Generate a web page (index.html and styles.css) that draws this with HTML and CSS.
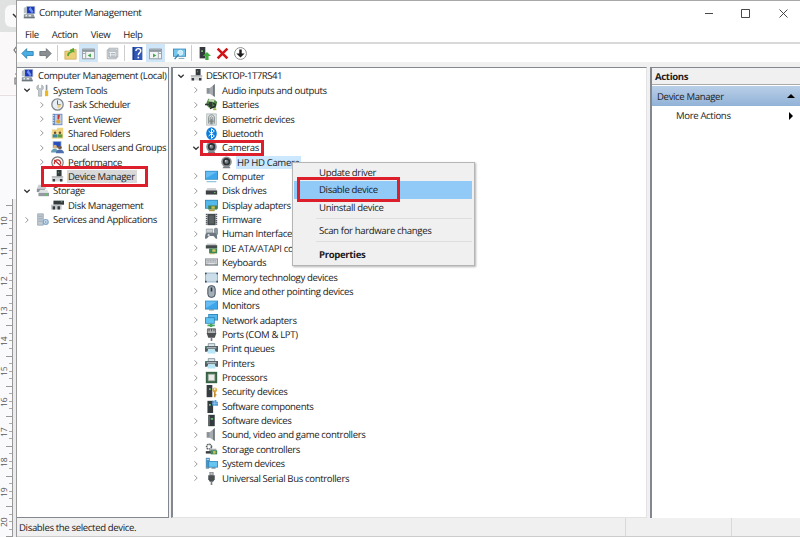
FILE: index.html
```html
<!DOCTYPE html>
<html lang="en">
<head>
    <meta charset="UTF-8">
    <title>Computer Management</title>
    <link rel="stylesheet" href="styles.css">
</head>
<body>
    <svg class="sprite" xmlns="http://www.w3.org/2000/svg">
        <symbol id="mgmt" viewBox="0 0 16 16"><path d="M1 2l4-1v8H1z" fill="#b9c0c8"/><path d="M4 0h11v10H4z" fill="#b4bfcb"/><path d="M5 1h9v8H5z" fill="#1d37b8"/><path d="M9 1l4 6-2 2-4-5z" fill="#6f92ee"/><path d="M1 10h12l2 5H1z" fill="#8e979e"/><path d="M3 11h2v2H3zM7 11h3v2H7z" fill="#e5e9ec"/><path d="M1 14h13v1H1z" fill="#59636b"/></symbol>
        <symbol id="tools" viewBox="0 0 16 16"><path d="M3 1v4l2 1 2-1V1l2 2v3L7 8v7H3V8L1 6V3z" fill="#c3c8cc" stroke="#858c91" stroke-width=".6"/><path d="M12 1h2v7h-2z" fill="#8d969d"/><path d="M11 8h4v7h-4z" fill="#edb91f"/></symbol>
        <symbol id="clock" viewBox="0 0 16 16"><circle cx="8" cy="8" r="7" fill="#e8eff4" stroke="#83888d" stroke-width="1.6"/><path d="M8 3v5h4" stroke="#48637a" fill="none" stroke-width="1.2"/><path d="M8 8h5l-2 4-3 1z" fill="#ecd08c"/></symbol>
        <symbol id="event" viewBox="0 0 16 16"><path d="M2 1h12v14H2z" fill="#6587bb"/><path d="M5 2h8v12H5z" fill="#c0d0e4"/><path d="M2 3h2M2 6h2M2 9h2M2 12h2" stroke="#fff"/><path d="M8 2h3l-1 6H8z" fill="#c6342c"/><circle cx="9" cy="10.500" r="2.500" fill="#e0a72c"/></symbol>
        <symbol id="shared" viewBox="0 0 16 16"><path d="M1 3h6l1-2h7v13H1z" fill="#eed27c"/><path d="M1 5h13v9H1z" fill="#f5df92"/><circle cx="5" cy="7" r="1.6" fill="#704f2e"/><path d="M2 13V9h6v4z" fill="#3c86a2"/><circle cx="11" cy="7" r="1.6" fill="#704f2e"/><path d="M8.500 13V9H14v4z" fill="#5f9a49"/></symbol>
        <symbol id="users" viewBox="0 0 16 16"><path d="M2 0h11v9H2z" fill="#b9c5d4"/><path d="M3 1h9v7H3z" fill="#294fbc"/><circle cx="5" cy="7" r="2.300" fill="#d5b47f"/><path d="M0 14c0-6 9-6 9 0z" fill="#669eb5"/><circle cx="11" cy="8" r="2.300" fill="#765b44"/><path d="M6 15c0-6 10-6 10 0z" fill="#4d6fae"/></symbol>
        <symbol id="perf" viewBox="0 0 16 16"><circle cx="8" cy="8" r="7" fill="#fff" stroke="#777" stroke-width="1.4"/><path d="M4 10c0-7 8-7 8 0M4 5l8 7" stroke="#c52e2b" stroke-width="1.500" fill="none"/></symbol>
        <symbol id="device" viewBox="0 0 16 16"><path d="M7 0h6v8H7z" fill="#343a3d"/><path d="M9 2h1v2H9z" fill="#66b16a"/><path d="M1 8h14v6H1z" fill="#d6d8d9"/><path d="M1 8h14v1H1z" fill="#8d9193"/><path d="M2 11h3v3H2zM11 11h3v3h-3z" fill="#343a3d"/></symbol>
        <symbol id="storage" viewBox="0 0 16 16"><path d="M3 1h8l2 5H1z" fill="#c9ced1"/><path d="M1 6h10v4H1z" fill="#8c9499"/><path d="M5 7h9l2 4H3z" fill="#dfe2e4"/><path d="M3 11h13v4H3z" fill="#929a9f"/><path d="M11 12h3v2h-3z" fill="#5bca52"/></symbol>
        <symbol id="disk" viewBox="0 0 16 16"><path d="M3 2h13v5H3z" fill="#353a3d"/><path d="M12 3h2v1h-2z" fill="#7bd97c"/><path d="M0 7h13v6H0z" fill="#c3c6c8"/><path d="M2 9h3v4H2zM8 9h3v4H8z" fill="#353a3d"/></symbol>
        <symbol id="services" viewBox="0 0 16 16"><path d="M2 1h7v14H2z" fill="#c2cbd2" stroke="#7e8b96" stroke-width=".7"/><path d="M3 4h5M3 7h5M3 10h5" stroke="#8ea3b5"/><circle cx="12" cy="11" r="3" fill="#d5e3ef" stroke="#7fa7cc" stroke-width="1.500"/><circle cx="12" cy="11" r="1" fill="#5f8fbd"/></symbol>
        <symbol id="speaker" viewBox="0 0 16 16"><path d="M2 5h4v7H2z" fill="#8b9297"/><path d="M6 5l6-5v16l-6-4z" fill="#a6acb0"/><path d="M10 2l2-2v16l-2-2z" fill="#6b7277"/></symbol>
        <symbol id="battery" viewBox="0 0 16 16"><path d="M4 1l8 1 3 3-2 8-8-1-4-4z" fill="#4f8544"/><path d="M5 1l7 1-1 3-7-1z" fill="#c6d8b9"/><path d="M0 7h5v-2h4v6H5V9H0z" fill="#32383a"/><path d="M10 7c4 0 3 3 1 4l-5 2" fill="none" stroke="#222" stroke-width="1.500"/><path d="M10 13h4v2h-4z" fill="#9fb43c"/></symbol>
        <symbol id="finger" viewBox="0 0 16 16"><path d="M2 1h12v14H2z" fill="#dfe3e3" stroke="#a6adad" stroke-width=".8"/><path d="M4.500 13V6c0-5 7-5 7 0v7M6.500 14V7c0-3 3-3 3 0v7M8 7v7M5 10h6" fill="none" stroke="#707979"/></symbol>
        <symbol id="bluetooth" viewBox="0 0 16 16"><ellipse cx="8" cy="8" rx="6.500" ry="7.800" fill="#0d7cdb"/><path d="M4.500 5l7 6L8 14V2l3.500 3-7 6" fill="none" stroke="#fff" stroke-width="1.200"/></symbol>
        <symbol id="camera" viewBox="0 0 16 16"><path d="M5 12h6l2 3H3z" fill="#777e82"/><circle cx="8" cy="7" r="6.500" fill="#8b9195"/><circle cx="8" cy="7" r="4.500" fill="#2b3033"/><circle cx="8" cy="7" r="2.500" fill="#777f84"/><circle cx="7" cy="6" r="1" fill="#d5dcdf"/></symbol>
        <symbol id="monitor" viewBox="0 0 16 16"><path d="M0 2h16v11H0z" fill="#2d8fc5"/><path d="M1 3h14v9H1z" fill="#3ea6ea"/><path d="M1 3h14L1 11z" fill="#67bdf4"/><path d="M5 13h6v1H5z" fill="#68747b"/></symbol>
        <symbol id="computer" viewBox="0 0 16 16"><path d="M0 1h16v11H0z" fill="#2d8fc5"/><path d="M1 2h14v9H1z" fill="#3ea6ea"/><path d="M1 2h14L1 10z" fill="#67bdf4"/><path d="M2 14h12v1H2z" fill="#58a6c9"/></symbol>
        <symbol id="drive" viewBox="0 0 16 16"><path d="M3 5h10l2 4H1z" fill="#cdd0d2"/><path d="M1 8h14v5H1z" fill="#3d4143"/><path d="M11 10h2v1h-2z" fill="#74cd75"/></symbol>
        <symbol id="display" viewBox="0 0 16 16"><path d="M0 1h16v11H0z" fill="#3289b9"/><path d="M1 2h14v9H1z" fill="#53b9ed"/><path d="M4 8h11v5H4z" fill="#427f50"/><path d="M8 9h4v3H8z" fill="#d0bc55"/><path d="M5 13h7v2H5z" fill="#b0a449"/></symbol>
        <symbol id="chip" viewBox="0 0 16 16"><path d="M3 1h10v14H3z" fill="#444b4e"/><path d="M5 3h6v10H5z" fill="#5b6265"/><path d="M2 1v14M14 1v14" stroke="#555d61" stroke-width="2" stroke-dasharray="1.600 .8"/></symbol>
        <symbol id="hid" viewBox="0 0 16 16"><path d="M1 2h9v6H1z" fill="#a2aaaf"/><path d="M2 4h7M2 6h7" stroke="#e4e8ea"/><rect x="11" y="1" width="5" height="9" rx="2" fill="#8c969e"/><path d="M0 14c0-8 2-7 5-7h4c5 0 6 1 6 7-2 2-3-3-5-3H6c-2 0-4 5-6 3z" fill="#6c7780"/><path d="M3 10h3M4.500 8.500v3" stroke="#eceff1"/></symbol>
        <symbol id="ide" viewBox="0 0 16 16"><path d="M2 2h12v3H2z" fill="#c5c9cb"/><path d="M1 4h14v4H1z" fill="#444b4d"/><path d="M5 8h10v6H5z" fill="#3c8957"/><path d="M9 9h4v3H9z" fill="#d9c65f"/><path d="M6 14h6v1H6z" fill="#b29a3f"/></symbol>
        <symbol id="keyboard" viewBox="0 0 16 16"><path d="M0 3h16v9H0z" fill="#868d91"/><path d="M1 4h14v6H1z" fill="#c9cdd0"/><path d="M2 5.500h12M2 7.500h12" stroke="#9aa1a5" stroke-dasharray="1.300 .7"/><path d="M4 9.500h8" stroke="#eee"/></symbol>
        <symbol id="memory" viewBox="0 0 16 16"><path d="M0 2h16v12H0z" fill="#8fa9bd"/><path d="M1 3h14v10H1z" fill="#cbdde9"/><path d="M0 2h2v2H0zM14 2h2v2h-2zM0 12h2v2H0zM14 12h2v2h-2z" fill="#344b5d"/></symbol>
        <symbol id="mouse" viewBox="0 0 16 16"><rect x="3.500" y=".800" width="9" height="14.400" rx="4" fill="#a4afb7" stroke="#3e4b54" stroke-width="1.200"/><path d="M8 3v5" stroke="#2b353b" stroke-width="2"/></symbol>
        <symbol id="network" viewBox="0 0 16 16"><path d="M4 0h12v8H4z" fill="#2b83bb"/><path d="M5 1h10v6H5z" fill="#55b7eb"/><path d="M0 4h12v8H0z" fill="#2b83bb"/><path d="M1 5h10v6H1z" fill="#5fc3f2"/><path d="M3 13h9v2H3zM6 12h3v4H6z" fill="#43a45c"/></symbol>
        <symbol id="port" viewBox="0 0 16 16"><path d="M3 1h10v6H3z" fill="#b1b5b7" stroke="#565b5e"/><path d="M5 1v3M8 1v3M11 1v3" stroke="#444"/><path d="M2 6h12l-2 6H4z" fill="#4c5053"/><path d="M7 12h2v4H7z" fill="#74797c"/></symbol>
        <symbol id="printer" viewBox="0 0 16 16"><path d="M4 2h8v4H4z" fill="#dfe7ea" stroke="#607680" stroke-width=".8"/><path d="M0 5h16v7h-3l-1-3H4l-1 3H0z" fill="#4f5c62"/><path d="M2 6h12v2H2z" fill="#a6b0b5"/><path d="M4 9h8l1 5H3z" fill="#b7e6f7"/><path d="M0 5h2v2H0z" fill="#388f66"/></symbol>
        <symbol id="cpu" viewBox="0 0 16 16"><path d="M1 1h14v14H1z" fill="#386245"/><path d="M4 4h8v8H4z" fill="#e8ebe7" stroke="#9fad9f"/></symbol>
        <symbol id="security" viewBox="0 0 16 16"><path d="M2 0h7v15H2z" fill="#363d40"/><path d="M5 4h2v2H5z" fill="#68c677"/><circle cx="12" cy="6" r="3" fill="#e0ad45"/><circle cx="12" cy="5" r="1" fill="#fff"/><path d="M11 8h2v7h-2zM13 11h1v2h-1z" fill="#c28c2e"/></symbol>
        <symbol id="component" viewBox="0 0 16 16"><path d="M3 1h7v15H3z" fill="#343b3e"/><path d="M5 5h2v2H5z" fill="#7ad487"/><path d="M9 1h3V0h2v2h2v5H9z" fill="#4c9dda"/><path d="M12 1v6M9 4h7" stroke="#b7dcf4" stroke-width=".6"/></symbol>
        <symbol id="software" viewBox="0 0 16 16"><path d="M4 1h8v14H4z" fill="#343b3e"/><path d="M5 2h1v12H5z" fill="#697174"/><path d="M7 5h3v2H7z" fill="#67bf76"/></symbol>
        <symbol id="storectl" viewBox="0 0 16 16"><circle cx="5" cy="4.500" r="3" fill="none" stroke="#5a6265" stroke-width="2" stroke-dasharray="2 .8"/><path d="M5 7h9v3H5z" fill="#a5abae"/><path d="M1 10h8v3H1z" fill="#373d40"/><path d="M7 9h8v5H7z" fill="#3e8b56"/><path d="M10 10h3v3h-3z" fill="#d8c45b"/></symbol>
        <symbol id="system" viewBox="0 0 16 16"><path d="M1 1h5v12H1z" fill="#4f92bb"/><path d="M2 3h3" stroke="#c8e3f3"/><path d="M4 5h12v8H4z" fill="#328bc0"/><path d="M5 6h10v6H5z" fill="#67c5f1"/><path d="M1 13h4v1H1zM8 13h5v1H8z" fill="#496777"/></symbol>
        <symbol id="usb" viewBox="0 0 16 16"><path d="M6 0h4v4H6z" fill="#bfc3c5" stroke="#5b6265" stroke-width=".8"/><path d="M4 4h8v5l-2 3H6l-2-3z" fill="#4a4f52"/><path d="M7 12h2v4H7z" fill="#777d80"/></symbol>
        <symbol id="back" viewBox="0 0 16 16"><path d="M1 8l6-6v3.500h8v5H7V14z" fill="#48aee3" stroke="#287cae"/></symbol>
        <symbol id="forward" viewBox="0 0 16 16"><path d="M15 8L9 2v3.500H1v5h8V14z" fill="#8a8f93" stroke="#676c70"/></symbol>
        <symbol id="folder-up" viewBox="0 0 16 16"><path d="M1 5h6l1-2h7v12H1z" fill="#edcf77" stroke="#c8a653" stroke-width=".8"/><path d="M4 11c0-4 1-5 4-5L7 4l5-3 1 6-2-1c-3 1-5 2-5 5z" fill="#55aa36"/></symbol>
        <symbol id="pane" viewBox="0 0 16 16"><path d="M.5 2.500h15v12H.5z" fill="#f2f4f5" stroke="#818b92"/><path d="M1 3h14v3H1z" fill="#8e989f"/><path d="M4.500 6v8M4 8H1" stroke="#929ba1"/><path d="M11 8v5l-4-2.500z" fill="#43a347"/></symbol>
        <symbol id="pane2" viewBox="0 0 16 16"><path d="M.5 2.500h15v12H.5z" fill="#f2f4f5" stroke="#818b92"/><path d="M1 3h14v3H1z" fill="#8e989f"/><path d="M11.500 6v8M12 8h3" stroke="#929ba1"/><path d="M5 8v5l4-2.500z" fill="#43a347"/></symbol>
        <symbol id="props" viewBox="0 0 16 16"><path d="M3.500 1.500h11v11h-11zM1.500 3.500h11v11h-11z" fill="#eef1f3" stroke="#9ba4aa"/><path d="M2 4h12v2H2z" fill="#b6bec4"/><path d="M3 8h2M6 8h5M3 10h2M6 10h5M3 12h2M6 12h5" stroke="#a5adb3"/></symbol>
        <symbol id="help" viewBox="0 0 16 16"><path d="M2 0h12v16H2z" fill="#3159b5"/><path d="M2 0h2v16H2z" fill="#203d88"/><path d="M6 5c0-4 6-4 6 0 0 2-3 2-3 5" fill="none" stroke="#fff" stroke-width="1.800"/><path d="M8 12h2v2H8z" fill="#fff"/></symbol>
        <symbol id="scan" viewBox="0 0 16 16"><path d="M0 2h16v10H0z" fill="#3588b8"/><path d="M1 3h14v8H1z" fill="#73c6ee"/><circle cx="9" cy="7" r="3" fill="#c8eafa" stroke="#f1f7fa"/><path d="M7 9l-5 6" stroke="#357fab" stroke-width="1.500"/><path d="M7 14h7" stroke="#6a8da0"/></symbol>
        <symbol id="enable" viewBox="0 0 16 16"><path d="M2 0h7v14H2z" fill="#343a3d"/><path d="M4 4h2v2H4z" fill="#76cb78"/><path d="M11 6l5 5h-3v5H9v-5H6z" fill="#44aa43"/></symbol>
        <symbol id="cross" viewBox="0 0 16 16"><path d="M2 2l12 12M14 2L2 14" stroke="#d21419" stroke-width="3.200"/></symbol>
        <symbol id="down" viewBox="0 0 16 16"><circle cx="8" cy="8" r="7.300" fill="#fff" stroke="#777"/><path d="M6.500 3h3v5H13l-5 5-5-5h3.500z" fill="#1b1b1b"/></symbol>
        <symbol id="closed" viewBox="0 0 10 10"><path d="M3.500 2.300L6.200 5 3.500 7.700" fill="none" stroke="#999"/></symbol>
        <symbol id="open" viewBox="0 0 10 10"><path d="M2.300 3.700L5 6.300l2.700-2.600" fill="none" stroke="#333" stroke-width="1.200"/></symbol>
    </svg>

    <div class="screen">
        <!-- document window showing behind, only its left edge -->
        <div class="behind">
            <div class="tab"><svg viewBox="0 0 12 22"><path d="M8 9l3 3 4-4" fill="none" stroke="#333" stroke-width="1.500"/></svg></div>
            <div class="behind-tools"><svg viewBox="0 0 17 64"><path d="M17 14l-3 4 3 4M15 42h2M15 46h2v6h-2z" fill="none" stroke="#777" stroke-width="1.200"/></svg></div>
            <div class="behind-page"></div>
            <div class="ruler">
                <span>10</span><span>11</span><span>12</span><span>13</span><span>14</span><span>15</span><span>16</span><span>17</span><span>18</span><span>19</span><span>20</span>
            </div>
        </div>

        <div class="window">
            <div class="titlebar">
                <svg class="icon"><use href="#mgmt"/></svg>
                <span class="title">Computer Management</span>
                <svg class="controls" viewBox="0 0 84 12"><path d="M1 6.500h8M37.500 2.500h8v8h-8zM75.500 2.500l8 8M83.500 2.500l-8 8" fill="none" stroke="#333" stroke-width=".9"/></svg>
            </div>
            <div class="menubar"><span>File</span><span>Action</span><span>View</span><span>Help</span></div>
            <div class="toolbar">
                <b><svg><use href="#back"/></svg></b>
                <b><svg><use href="#forward"/></svg></b>
                <i></i>
                <b><svg><use href="#folder-up"/></svg></b>
                <b class="on"><svg><use href="#pane"/></svg></b>
                <b class="spaced"><svg><use href="#props"/></svg></b>
                <i></i>
                <b><svg><use href="#help"/></svg></b>
                <b class="on"><svg><use href="#pane2"/></svg></b>
                <b class="spaced"><svg><use href="#scan"/></svg></b>
                <i></i>
                <b><svg><use href="#enable"/></svg></b>
                <b><svg><use href="#cross"/></svg></b>
                <b><svg><use href="#down"/></svg></b>
            </div>

            <div class="panes">
                <ul class="tree console">
                    <li class="l0"><svg class="icon"><use href="#mgmt"/></svg><span>Computer Management (Local)</span></li>
                    <li class="l1"><svg class="arrow"><use href="#open"/></svg><svg class="icon"><use href="#tools"/></svg><span>System Tools</span></li>
                    <li class="l2"><svg class="arrow"><use href="#closed"/></svg><svg class="icon"><use href="#clock"/></svg><span>Task Scheduler</span></li>
                    <li class="l2"><svg class="arrow"><use href="#closed"/></svg><svg class="icon"><use href="#event"/></svg><span>Event Viewer</span></li>
                    <li class="l2"><svg class="arrow"><use href="#closed"/></svg><svg class="icon"><use href="#shared"/></svg><span>Shared Folders</span></li>
                    <li class="l2"><svg class="arrow"><use href="#closed"/></svg><svg class="icon"><use href="#users"/></svg><span>Local Users and Groups</span></li>
                    <li class="l2"><svg class="arrow"><use href="#closed"/></svg><svg class="icon"><use href="#perf"/></svg><span>Performance</span></li>
                    <li class="l2 current"><svg class="arrow"></svg><svg class="icon"><use href="#device"/></svg><span>Device Manager</span><em class="mark mark-manager"></em></li>
                    <li class="l1"><svg class="arrow"><use href="#open"/></svg><svg class="icon"><use href="#storage"/></svg><span>Storage</span></li>
                    <li class="l2"><svg class="arrow"></svg><svg class="icon"><use href="#disk"/></svg><span>Disk Management</span></li>
                    <li class="l1"><svg class="arrow"><use href="#closed"/></svg><svg class="icon"><use href="#services"/></svg><span>Services and Applications</span></li>
                </ul>

                <ul class="tree devices">
                    <li class="l0"><svg class="arrow"><use href="#open"/></svg><svg class="icon"><use href="#device"/></svg><span class="host">DESKTOP-1T7RS41</span></li>
                    <li class="l1"><svg class="arrow"><use href="#closed"/></svg><svg class="icon"><use href="#speaker"/></svg><span>Audio inputs and outputs</span></li>
                    <li class="l1"><svg class="arrow"><use href="#closed"/></svg><svg class="icon"><use href="#battery"/></svg><span>Batteries</span></li>
                    <li class="l1"><svg class="arrow"><use href="#closed"/></svg><svg class="icon"><use href="#finger"/></svg><span>Biometric devices</span></li>
                    <li class="l1"><svg class="arrow"><use href="#closed"/></svg><svg class="icon"><use href="#bluetooth"/></svg><span>Bluetooth</span></li>
                    <li class="l1"><svg class="arrow"><use href="#open"/></svg><svg class="icon"><use href="#camera"/></svg><span>Cameras</span><em class="mark mark-cameras"></em></li>
                    <li class="l2 selected"><svg class="arrow"></svg><svg class="icon"><use href="#camera"/></svg><span>HP HD Camera</span></li>
                    <li class="l1"><svg class="arrow"><use href="#closed"/></svg><svg class="icon"><use href="#computer"/></svg><span>Computer</span></li>
                    <li class="l1"><svg class="arrow"><use href="#closed"/></svg><svg class="icon"><use href="#drive"/></svg><span>Disk drives</span></li>
                    <li class="l1"><svg class="arrow"><use href="#closed"/></svg><svg class="icon"><use href="#display"/></svg><span>Display adapters</span></li>
                    <li class="l1"><svg class="arrow"><use href="#closed"/></svg><svg class="icon"><use href="#chip"/></svg><span>Firmware</span></li>
                    <li class="l1"><svg class="arrow"><use href="#closed"/></svg><svg class="icon"><use href="#hid"/></svg><span>Human Interface</span></li>
                    <li class="l1"><svg class="arrow"><use href="#closed"/></svg><svg class="icon"><use href="#ide"/></svg><span>IDE ATA/ATAPI con</span></li>
                    <li class="l1"><svg class="arrow"><use href="#closed"/></svg><svg class="icon"><use href="#keyboard"/></svg><span>Keyboards</span></li>
                    <li class="l1"><svg class="arrow"><use href="#closed"/></svg><svg class="icon"><use href="#memory"/></svg><span>Memory technology devices</span></li>
                    <li class="l1"><svg class="arrow"><use href="#closed"/></svg><svg class="icon"><use href="#mouse"/></svg><span>Mice and other pointing devices</span></li>
                    <li class="l1"><svg class="arrow"><use href="#closed"/></svg><svg class="icon"><use href="#monitor"/></svg><span>Monitors</span></li>
                    <li class="l1"><svg class="arrow"><use href="#closed"/></svg><svg class="icon"><use href="#network"/></svg><span>Network adapters</span></li>
                    <li class="l1"><svg class="arrow"><use href="#closed"/></svg><svg class="icon"><use href="#port"/></svg><span>Ports (COM &amp; LPT)</span></li>
                    <li class="l1"><svg class="arrow"><use href="#closed"/></svg><svg class="icon"><use href="#printer"/></svg><span>Print queues</span></li>
                    <li class="l1"><svg class="arrow"><use href="#closed"/></svg><svg class="icon"><use href="#printer"/></svg><span>Printers</span></li>
                    <li class="l1"><svg class="arrow"><use href="#closed"/></svg><svg class="icon"><use href="#cpu"/></svg><span>Processors</span></li>
                    <li class="l1"><svg class="arrow"><use href="#closed"/></svg><svg class="icon"><use href="#security"/></svg><span>Security devices</span></li>
                    <li class="l1"><svg class="arrow"><use href="#closed"/></svg><svg class="icon"><use href="#component"/></svg><span>Software components</span></li>
                    <li class="l1"><svg class="arrow"><use href="#closed"/></svg><svg class="icon"><use href="#software"/></svg><span>Software devices</span></li>
                    <li class="l1"><svg class="arrow"><use href="#closed"/></svg><svg class="icon"><use href="#speaker"/></svg><span>Sound, video and game controllers</span></li>
                    <li class="l1"><svg class="arrow"><use href="#closed"/></svg><svg class="icon"><use href="#storectl"/></svg><span>Storage controllers</span></li>
                    <li class="l1"><svg class="arrow"><use href="#closed"/></svg><svg class="icon"><use href="#system"/></svg><span>System devices</span></li>
                    <li class="l1"><svg class="arrow"><use href="#closed"/></svg><svg class="icon"><use href="#usb"/></svg><span>Universal Serial Bus controllers</span></li>
                </ul>

                <div class="actions">
                    <div class="actions-head">Actions</div>
                    <div class="actions-group">Device Manager<svg viewBox="0 0 8 8"><path d="M0 6l4-4 4 4z"/></svg></div>
                    <div class="actions-item">More Actions<svg viewBox="0 0 8 8"><path d="M2 0l4 4-4 4z"/></svg></div>
                </div>
            </div>

            <div class="statusbar"><span>Disables the selected device.</span><span></span><span></span></div>
        </div>

        <div class="context-menu">
            <div class="item">Update driver</div>
            <div class="item hover">Disable device<em class="mark mark-disable"></em></div>
            <div class="item">Uninstall device</div>
            <hr>
            <div class="item">Scan for hardware changes</div>
            <hr>
            <div class="item bold">Properties</div>
        </div>
    </div>
</body>
</html>
```
FILE: styles.css
```css
* {
    box-sizing: border-box;
}
body {
    margin: 0;
    font-family: "Open Sans", "Noto Sans", sans-serif;
    font-size: 9.6px;
    letter-spacing: -0.36px;
    color: #1c1c1c;
    overflow: hidden;
    text-rendering: geometricPrecision;
}
.sprite {
    display: none;
}
.screen {
    position: relative;
    display: flex;
    width: 800px;
    height: 537px;
    background: #f0f0f0;
}
svg {
    display: block;
    flex: none;
}

/* window behind */
.behind {
    width: 17px;
    display: flex;
    flex-direction: column;
    background: linear-gradient(#dfe2e1 32px, #fafafc 32px);
    border-right: 1px solid #999;
    overflow: hidden;
}
.tab {
    height: 22px;
    margin: 5px 0 5px 5px;
    background: #fafafa;
    border-radius: 6px 0 0 6px;
}
.tab svg {
    width: 12px;
    height: 22px;
}
.behind-tools {
    height: 64px;
    background: #faf8f9;
    border-radius: 6px 0 0 0;
    border-bottom: 1px solid #e8dfe4;
}
.behind-tools svg {
    width: 17px;
    height: 64px;
}
.behind-page {
    height: 103px;
}
.ruler {
    flex: 1;
    width: 16px;
    padding-top: 7px;
    border-right: 3px solid #ececef;
    background:
        linear-gradient(#999, #999) 12px 0 / 1px 100% no-repeat,
        repeating-linear-gradient(#999 0 1px, transparent 1px 30.1px) 6px 6px / 6px 100% no-repeat,
        repeating-linear-gradient(#aaa 0 1px, transparent 1px 7.525px) 9px 6px / 3px 100% no-repeat;
}
.ruler span {
    display: block;
    width: 9px;
    height: 30.1px;
    writing-mode: vertical-rl;
    transform: rotate(180deg);
    text-align: center;
    font-size: 8.5px;
    line-height: 9px;
    letter-spacing: 0;
    color: #555;
}

/* main window */
.window {
    flex: 1;
    display: flex;
    flex-direction: column;
    min-width: 0;
    border-top: 1px solid #a8a8a8;
}
.titlebar {
    display: flex;
    align-items: center;
    height: 25px;
    padding: 0 12px 2px 6px;
    background: #fff;
}
.titlebar .title {
    flex: 1;
    margin-left: 3px;
    font-size: 9.8px;
}
.icon {
    width: 13px;
    height: 13px;
}
.controls {
    width: 84px;
    height: 12px;
}
.menubar {
    display: flex;
    align-items: center;
    gap: 13px;
    height: 18px;
    padding-left: 8px;
    background: #fff;
    border-bottom: 2px solid #d9d9d9;
}
.toolbar {
    display: flex;
    align-items: center;
    height: 18px;
    padding-left: 1px;
    background: #fff;
}
.toolbar b {
    display: flex;
    align-items: center;
    justify-content: center;
    width: 18px;
    height: 18px;
}
.toolbar svg {
    width: 13px;
    height: 13px;
}
.toolbar .on {
    width: 19px;
    background: #cfe6f8;
}
.toolbar .spaced {
    margin-left: 5px;
}
.toolbar i {
    width: 1px;
    height: 16px;
    margin: 0 3px;
    background: #ccc;
}

.panes {
    flex: 1;
    display: flex;
    padding-top: 5px;
    min-height: 0;
}
.tree {
    margin: 0;
    padding: 0.8px 0 0;
    list-style: none;
    background: #fff;
    border: 1px solid #828790;
}
.console {
    width: 152px;
    margin-right: 2px;
    border-left: 0;
}
.devices {
    width: 476px;
    margin-right: 3px;
    border-left-width: 2px;
    border-right-color: #e3e3e3;
    border-bottom-color: #e3e3e3;
}
.tree li {
    position: relative;
    display: flex;
    align-items: center;
    height: 14.36px;
    white-space: nowrap;
}
.tree span {
    margin-left: 3px;
    padding: 0 2px 0 1px;
    line-height: 13px;
}
.arrow {
    width: 10px;
    height: 10px;
    margin-right: 4px;
}
.console .l0 {
    padding-left: 4px;
}
.console .l1 {
    padding-left: 5px;
}
.console .l2 {
    padding-left: 20px;
}
.devices .l0 {
    padding-left: 3px;
}
.devices .l1 {
    padding-left: 18px;
}
.devices .l2 {
    padding-left: 33px;
}
.tree .host {
    margin-left: 2px;
    letter-spacing: -0.5px;
}
.current span {
    background: #d9d9d9;
}
.selected span {
    background: #cce8ff;
}

/* red highlight frames */
.mark {
    position: absolute;
    z-index: 3;
    border: 3px solid #dc1f2b;
}
.mark-manager {
    left: 24px;
    top: -3px;
    width: 107px;
    height: 21px;
}
.mark-cameras {
    left: 27px;
    top: -1px;
    width: 64px;
    height: 16px;
}
.mark-disable {
    left: 3px;
    top: -4px;
    width: 103px;
    height: 25px;
}

.actions {
    flex: 1;
    background: #fff;
    border-top: 1px solid #828790;
    border-left: 2px solid #828790;
}
.actions-head {
    height: 17px;
    padding-left: 3px;
    line-height: 18px;
    font-weight: bold;
    background: #f0f0f0;
    border-bottom: 1px solid #aaa;
}
.actions-group,
.actions-item {
    display: flex;
    align-items: center;
    justify-content: space-between;
    height: 20px;
    padding: 0 5px;
}
.actions-group {
    margin-top: 1px;
    background: linear-gradient(#b9cfe8, #91b2d7);
}
.actions-item {
    height: 19px;
    padding-left: 24px;
}
.actions svg {
    width: 8px;
    height: 8px;
}

.statusbar {
    display: flex;
    height: 19px;
    border-bottom: 1px solid #ccc;
    line-height: 20px;
    overflow: hidden;
}
.statusbar span {
    flex: none;
    width: 106px;
    border-right: 1px solid #d9d9d9;
}
.statusbar span:first-child {
    width: 609px;
    padding-left: 2px;
}

.context-menu {
    position: absolute;
    left: 292px;
    top: 162px;
    width: 183px;
    height: 104px;
    padding: 0.5px 2px 0 1px;
    background: #f0f0f0;
    border: 1px solid #b5b5b5;
    box-shadow: 1px 1px 2px rgba(0, 0, 0, 0.3);
}
.context-menu .item {
    position: relative;
    height: 17.6px;
    padding-left: 25px;
    line-height: 18px;
}
.context-menu .hover {
    background: #91c9f7;
}
.context-menu .bold {
    font-weight: bold;
}
.context-menu hr {
    height: 1px;
    margin: 1.5px 0 3.5px 22px;
    border: 0;
    background: #dedede;
}
```
